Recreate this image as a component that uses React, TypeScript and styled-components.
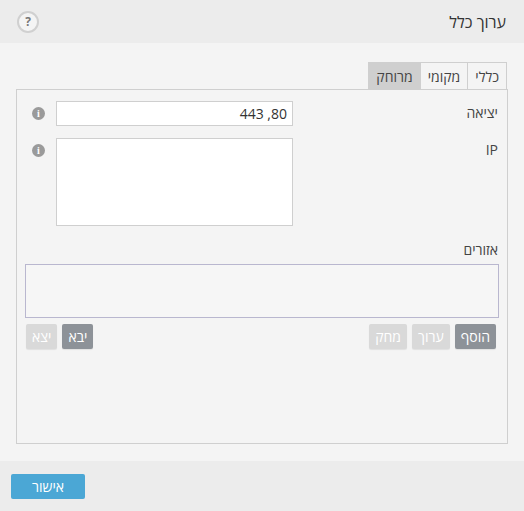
import React from "react";
import styled, { createGlobalStyle } from "styled-components";

const Global = createGlobalStyle`
  html, body { margin: 0; padding: 0; background: #f4f4f4; }
  body { font-family: "Open Sans", "DejaVu Sans", sans-serif; font-size: 14px; color: #333; }
`;

const Page = styled.div`
  direction: rtl;
  width: 524px;
  height: 511px;
  display: flex;
  flex-direction: column;
  & > * { flex-shrink: 0; }
`;

const Header = styled.div`
  height: 43px;
  background: #ececec;
  display: flex;
  align-items: center;
  justify-content: space-between;
  padding: 0 18px 0 17px;
`;

const Title = styled.div`
  font-size: 16px;
  color: #333;
`;

const Help = styled.div`
  width: 18px;
  height: 18px;
  border: 2px solid #d0d0d0;
  border-radius: 50%;
  display: flex;
  align-items: center;
  justify-content: center;
  font-size: 12px;
  font-weight: 700;
  color: #777;
  background: #f4f4f4;
`;

const Body = styled.div`
  height: 418px;
  background: #f4f4f4;
  padding: 19px 16px 0 16px;
  box-sizing: border-box;
  display: flex;
  flex-direction: column;
`;

const Tabs = styled.div`
  display: flex;
  padding-right: 1px;
`;

const Tab = styled.div<{ $active?: boolean }>`
  height: 27px;
  padding: 0 7px;
  display: flex;
  align-items: center;
  border: 1px solid #cfcfcf;
  border-bottom: none;
  margin-left: -1px;
  box-sizing: border-box;
  background: ${(p) => (p.$active ? "#cfcfcf" : "#f4f4f4")};
  color: #444;
`;

const Panel = styled.div`
  height: 355px;
  box-sizing: border-box;
  border: 1px solid #cfcfcf;
  padding: 11px 8px 0 8px;
  display: flex;
  flex-direction: column;
`;

const Row = styled.div`
  display: flex;
  align-items: flex-start;
  margin-bottom: 12px;
`;

const Label = styled.div`
  width: 205px;
  padding-right: 1px;
  line-height: 24px;
  color: #444;
`;

const Input = styled.div`
  border: 1px solid #cfcfcf;
  background: #fff;
  line-height: 23px;
  padding-right: 5px;
  box-sizing: border-box;
  width: 237px;
  height: 25px;
`;

const Area = styled.div`
  width: 237px;
  height: 88px;
  border: 1px solid #cfcfcf;
  background: #fff;
  box-sizing: border-box;
`;

const Info = styled.div`
  width: 13px;
  height: 13px;
  border-radius: 50%;
  background: #9a9a9a;
  color: #fff;
  font-size: 10px;
  font-weight: 700;
  font-family: "Liberation Serif", serif;
  display: flex;
  align-items: center;
  justify-content: center;
  margin: 6px 11px 0 0;
`;

const SectionLabel = styled.div`
  margin-top: 2px;
  padding-right: 1px;
  color: #444;
  line-height: 20px;
`;

const ListBox = styled.div`
  margin-top: 4px;
  height: 54px;
  border: 1px solid #b9b7cf;
  background: #f6f6f6;
  box-sizing: border-box;
`;

const ButtonBar = styled.div`
  display: flex;
  justify-content: space-between;
  margin-top: 6px;
  padding: 0 3px 0 1px;
`;

const Group = styled.div`
  display: flex;
  gap: 5px;
`;

const SmallBtn = styled.div<{ $dark?: boolean }>`
  height: 25px;
  padding: 0 6px;
  display: flex;
  align-items: center;
  border-radius: 2px;
  color: #fff;
  background: ${(p) => (p.$dark ? "#8d9298" : "#d9d9d9")};
  box-shadow: 0 1px 1px rgba(0, 0, 0, 0.08);
`;

const Footer = styled.div`
  height: 50px;
  background: #ececec;
  display: flex;
  align-items: center;
  padding-left: 11px;
  direction: ltr;
`;

const Ok = styled.div`
  width: 74px;
  height: 25px;
  background: #4ba7d5;
  border-radius: 2px;
  color: #fff;
  display: flex;
  align-items: center;
  justify-content: center;
`;

export default function App() {
  return (
    <>
      <Global />
      <Page>
        <Header>
          <Title>ערוך כלל</Title>
          <Help>?</Help>
        </Header>
        <Body>
          <Tabs>
            <Tab>כללי</Tab>
            <Tab>מקומי</Tab>
            <Tab $active>מרוחק</Tab>
          </Tabs>
          <Panel>
            <Row>
              <Label>יציאה</Label>
              <Input>80, 443</Input>
              <Info>i</Info>
            </Row>
            <Row>
              <Label>IP</Label>
              <Area />
              <Info>i</Info>
            </Row>
            <SectionLabel>אזורים</SectionLabel>
            <ListBox />
            <ButtonBar>
              <Group>
                <SmallBtn $dark>הוסף</SmallBtn>
                <SmallBtn>ערוך</SmallBtn>
                <SmallBtn>מחק</SmallBtn>
              </Group>
              <Group>
                <SmallBtn $dark>יבא</SmallBtn>
                <SmallBtn>יצא</SmallBtn>
              </Group>
            </ButtonBar>
          </Panel>
        </Body>
        <Footer>
          <Ok>אישור</Ok>
        </Footer>
      </Page>
    </>
  );
}
